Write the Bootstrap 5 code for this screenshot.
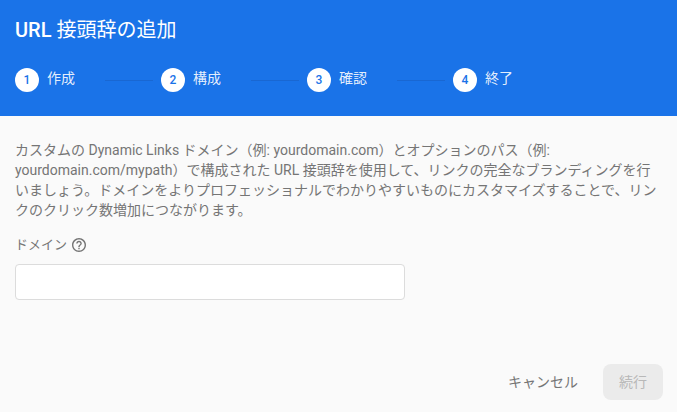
<!DOCTYPE html>
<html lang="ja">
<head>
<meta charset="utf-8">
<meta name="viewport" content="width=device-width, initial-scale=1">
<title>URL 接頭辞の追加</title>
<link href="https://cdn.jsdelivr.net/npm/bootstrap@5.3.0/dist/css/bootstrap.min.css" rel="stylesheet">
<style>
  body {
    font-family: Roboto, "Noto Sans CJK JP", sans-serif;
    font-size: 14px;
    line-height: 20px;
    color: #757575;
    background: #fafafa;
  }
  .dialog-head { background: #1a73e8; padding: 18px 15px 24px; }
  .dialog-title { font-size: 20px; line-height: 24px; font-weight: 400; margin-bottom: 26px; }
  .dialog-title span { font-weight: 500; }
  .step-item { gap: 8px; }
  .step-number {
    width: 24px;
    height: 24px;
    font-size: 12px;
    font-weight: 500;
    color: #1a73e8;
    background: #fff;
  }
  .step-label { color: rgba(255, 255, 255, .9); margin-bottom: 4px; }
  .step-line { width: 48px; height: 1px; margin: 0 8px 0 22px; background: #1967d2; }
  .dialog-main { padding: 24px 15px 0; }
  .field-label { font-size: 13px; gap: 5px; margin: 15px 0 9px; }
  .help-icon { width: 14px; height: 14px; }
  .domain-input {
    max-width: 390px;
    height: 36px;
    font-size: 14px;
    border-color: #dcdcdc;
    border-radius: 4px;
  }
  .dialog-actions { padding: 0 14px 12px; gap: 9px; }
  .action {
    --bs-btn-font-size: 14px;
    --bs-btn-line-height: 20px;
    --bs-btn-padding-x: 16px;
    --bs-btn-padding-y: 8px;
    --bs-btn-border-width: 0;
    --bs-btn-border-radius: 8px;
    --bs-btn-color: #757575;
    --bs-btn-hover-color: #424242;
    --bs-btn-disabled-color: #b8b8b8;
    --bs-btn-disabled-bg: #ebebeb;
    --bs-btn-disabled-opacity: 1;
  }
</style>
</head>
<body class="min-vh-100 d-flex flex-column">
  <header class="dialog-head text-white">
    <h1 class="dialog-title"><span>URL</span> 接頭辞の追加</h1>
    <ol class="list-unstyled d-flex mb-0">
      <li class="step-item d-flex align-items-center"><span class="step-number rounded-circle d-flex align-items-center justify-content-center">1</span><span class="step-label">作成</span><span class="step-line"></span></li>
      <li class="step-item d-flex align-items-center"><span class="step-number rounded-circle d-flex align-items-center justify-content-center">2</span><span class="step-label">構成</span><span class="step-line"></span></li>
      <li class="step-item d-flex align-items-center"><span class="step-number rounded-circle d-flex align-items-center justify-content-center">3</span><span class="step-label">確認</span><span class="step-line"></span></li>
      <li class="step-item d-flex align-items-center"><span class="step-number rounded-circle d-flex align-items-center justify-content-center">4</span><span class="step-label">終了</span></li>
    </ol>
  </header>
  <main class="dialog-main flex-grow-1">
    <p class="mb-0">カスタムの Dynamic Links ドメイン（例: yourdomain.com）とオプションのパス（例: yourdomain.com/mypath）で構成された URL 接頭辞を使用して、リンクの完全なブランディングを行いましょう。ドメインをよりプロフェッショナルでわかりやすいものにカスタマイズすることで、リンクのクリック数増加につながります。</p>
    <div class="field-label d-flex align-items-center">
      <label for="domain">ドメイン</label>
      <svg class="help-icon" viewBox="2 2 20 20" fill="currentColor" aria-hidden="true"><path d="M11 18h2v-2h-2v2zm1-16C6.480 2 2 6.480 2 12s4.480 10 10 10 10-4.480 10-10S17.520 2 12 2zm0 18c-4.410 0-8-3.590-8-8s3.590-8 8-8 8 3.590 8 8-3.590 8-8 8zm0-14c-2.210 0-4 1.790-4 4h2c0-1.100.9-2 2-2s2 .9 2 2c0 2-3 1.750-3 5h2c0-2.250 3-2.500 3-5 0-2.210-1.790-4-4-4z"/></svg>
    </div>
    <input id="domain" type="text" class="form-control domain-input">
  </main>
  <footer class="dialog-actions d-flex justify-content-end">
    <button type="button" class="btn action">キャンセル</button>
    <button type="button" class="btn action" disabled>続行</button>
  </footer>
<script src="https://cdn.jsdelivr.net/npm/bootstrap@5.3.0/dist/js/bootstrap.bundle.min.js"></script>
</body>
</html>
